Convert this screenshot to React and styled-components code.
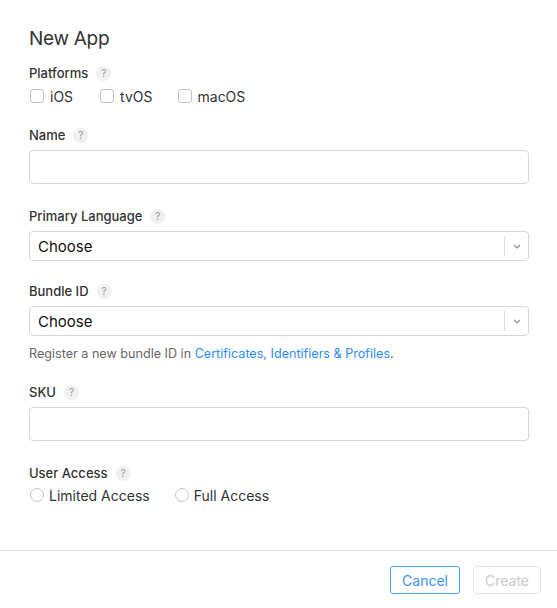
import React from 'react';
import styled, { createGlobalStyle } from 'styled-components';

const GlobalStyle = createGlobalStyle`
  html, body {
    margin: 0;
    padding: 0;
    background: #fff;
  }
  body {
    font-family: Inter, "Liberation Sans", Arial, sans-serif;
    color: #333;
  }
`;

const Dialog = styled.div`
  min-height: 608px;
  display: flex;
  flex-flow: column nowrap;
  background: #fff;
`;

const Body = styled.div`
  flex: 1 1 auto;
  padding: 27px 28px 0 29px;
`;

const Title = styled.h1`
  margin: 0 0 13px 0;
  font-size: 19px;
  line-height: 24px;
  font-weight: 400;
  letter-spacing: -0.3px;
  color: #333;
`;

const Field = styled.div`
  margin-bottom: ${p => p.$gap || 22}px;
`;

const Label = styled.div`
  display: flex;
  align-items: center;
  gap: 8px;
  height: 18px;
  margin-bottom: ${p => p.$gap || 6}px;
  font-size: 13px;
  font-weight: 500;
  color: #333;
`;

const Help = styled.span`
  display: inline-flex;
  justify-content: center;
  align-items: center;
  width: 15px;
  height: 15px;
  border-radius: 50%;
  background: #f0f0f2;
  color: #999;
  font-size: 10px;
  font-weight: 400;
`;

const Options = styled.div`
  display: flex;
  flex-flow: row nowrap;
  align-items: center;
  height: 18px;
`;

const Option = styled.label`
  display: flex;
  align-items: center;
  gap: ${p => (p.$radio ? 5 : 6)}px;
  margin-right: ${p => p.$space || 25}px;
  font-size: 14px;
  color: #333;
`;

const Box = styled.span`
  display: inline-block;
  box-sizing: border-box;
  width: 14px;
  height: 14px;
  border: 1px solid #c4c4c4;
  border-radius: ${p => (p.$radio ? '50%' : '3px')};
  background: #fff;
  margin-left: 1px;
`;

const Input = styled.div`
  box-sizing: border-box;
  height: 34px;
  border: 1px solid #d6d6d6;
  border-radius: 4px;
  background: #fff;
`;

const Select = styled.div`
  box-sizing: border-box;
  height: 30px;
  display: flex;
  align-items: center;
  border: 1px solid #d6d6d6;
  border-radius: 4px;
  padding-left: 8px;
  font-size: 15px;
  color: #111;
`;

const SelectText = styled.span`
  flex: 1 1 auto;
`;

const Arrow = styled.span`
  display: flex;
  justify-content: center;
  align-items: center;
  width: 23px;
  height: 20px;
  border-left: 1px solid #ddd;
`;

const Hint = styled.div`
  margin-top: 10px;
  font-size: 12.6px;
  line-height: 16px;
  color: #666;

  a {
    color: #2d8cf0;
    text-decoration: none;
  }
`;

const Footer = styled.div`
  display: flex;
  justify-content: flex-end;
  gap: 13px;
  border-top: 1px solid #e3e3e3;
  padding: 15px 16px 14px 0;
`;

const Button = styled.button`
  box-sizing: border-box;
  height: 28px;
  padding: 0 11px;
  border-radius: 3px;
  background: #fff;
  font-family: inherit;
  font-size: 14px;
  border: 1px solid ${p => (p.disabled ? '#e6e6e6' : '#4ca2f5')};
  color: ${p => (p.disabled ? '#cbcbcb' : '#3c93ee')};
`;

const Chevron = () => (
  <svg width="8" height="5" viewBox="0 0 8 5">
    <path d="M1 1l3 3 3-3" fill="none" stroke="#888" strokeWidth="1.1" />
  </svg>
);

const FieldLabel = ({ children, gap }) => (
  <Label $gap={gap}>
    {children}
    <Help>?</Help>
  </Label>
);

const App = () => (
  <Dialog>
    <GlobalStyle />
    <Body>
      <Title>New App</Title>

      <Field $gap={21}>
        <FieldLabel gap={5}>Platforms</FieldLabel>
        <Options>
          <Option $space={26}><Box />iOS</Option>
          <Option $space={24}><Box />tvOS</Option>
          <Option><Box />macOS</Option>
        </Options>
      </Field>

      <Field $gap={23}>
        <FieldLabel>Name</FieldLabel>
        <Input />
      </Field>

      <Field $gap={21}>
        <FieldLabel>Primary Language</FieldLabel>
        <Select>
          <SelectText>Choose</SelectText>
          <Arrow><Chevron /></Arrow>
        </Select>
      </Field>

      <Field $gap={21}>
        <FieldLabel>Bundle ID</FieldLabel>
        <Select>
          <SelectText>Choose</SelectText>
          <Arrow><Chevron /></Arrow>
        </Select>
        <Hint>
          Register a new bundle ID in <a href="#">Certificates, Identifiers &amp; Profiles</a>.
        </Hint>
      </Field>

      <Field $gap={23}>
        <FieldLabel>SKU</FieldLabel>
        <Input />
      </Field>

      <Field>
        <FieldLabel gap={4}>User Access</FieldLabel>
        <Options>
          <Option $radio $space={24}><Box $radio />Limited Access</Option>
          <Option $radio><Box $radio />Full Access</Option>
        </Options>
      </Field>
    </Body>

    <Footer>
      <Button>Cancel</Button>
      <Button disabled>Create</Button>
    </Footer>
  </Dialog>
);

export default App;
